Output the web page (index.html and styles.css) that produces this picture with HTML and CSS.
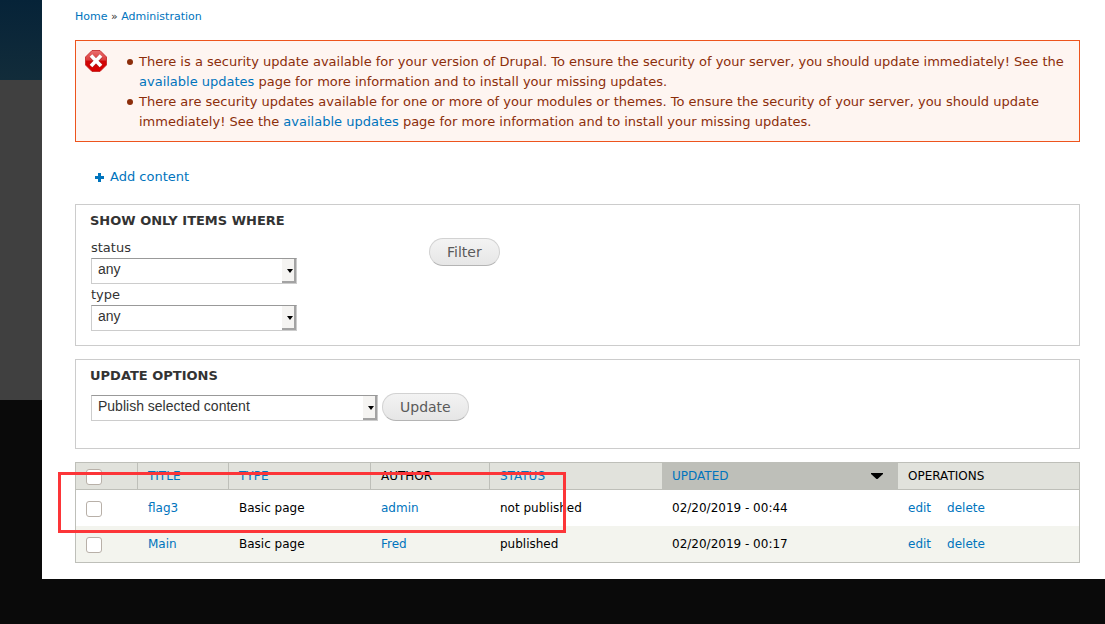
FILE: index.html
```html
<!DOCTYPE html>
<html lang="en">
<head>
<meta charset="utf-8">
<title>Content</title>
<link rel="stylesheet" href="styles.css">
</head>
<body>
<div class="shell">
  <div class="edge"><div class="edge-top"></div><div class="edge-mid"></div></div>
  <main class="page">
    <nav class="breadcrumb"><a href="#">Home</a> » <a href="#">Administration</a></nav>
    <div class="messages">
      <svg class="error-icon" viewBox="0 0 22 22" aria-hidden="true">
        <defs><linearGradient id="red" x1="0" y1="0" x2="0" y2="1">
          <stop offset="0" stop-color="#e87070"/><stop offset=".46" stop-color="#dc3b3b"/><stop offset=".5" stop-color="#d00606"/><stop offset="1" stop-color="#d80000"/>
        </linearGradient></defs>
        <path d="M7 .5h8L21.500 7v8L15 21.500H7L.5 15V7z" fill="url(#red)" stroke="#c22020" stroke-width=".8"/>
        <path d="M6 6l10 10M16 6L6 16" stroke="#8e3030" stroke-width="4.600" opacity=".5"/>
        <path d="M6 5.500l10 10.500M16 5.500L6 16" stroke="#fff" stroke-width="3.600"/>
      </svg>
      <ul>
        <li>There is a security update available for your version of Drupal. To ensure the security of your server, you should update immediately! See the <a href="#">available updates</a> page for more information and to install your missing updates.</li>
        <li>There are security updates available for one or more of your modules or themes. To ensure the security of your server, you should update immediately! See the <a href="#">available updates</a> page for more information and to install your missing updates.</li>
      </ul>
    </div>
    <a class="add" href="#"><svg viewBox="0 0 9 9" aria-hidden="true"><path d="M3 0h3v3h3v3H6v3H3V6H0V3h3z" fill="#0074bd"/></svg>Add content</a>

    <form>
      <section class="panel filter">
        <h2>Show only items where</h2>
        <div class="filter-body">
          <div class="fields">
            <label for="status">status</label>
            <span class="select"><select id="status"><option>any</option></select></span>
            <label for="type">type</label>
            <span class="select"><select id="type"><option>any</option></select></span>
          </div>
          <button type="button">Filter</button>
        </div>
      </section>

      <section class="panel update">
        <h2>Update options</h2>
        <div class="update-body">
          <span class="select wide"><select aria-label="Operation"><option>Publish selected content</option></select></span>
          <button type="button">Update</button>
        </div>
      </section>

      <div class="listing">
        <table>
          <colgroup><col class="c-check"><col class="c-title"><col class="c-type"><col class="c-author"><col class="c-status"><col class="c-updated"><col></colgroup>
          <thead>
            <tr>
              <th><input type="checkbox" aria-label="Select all rows"></th>
              <th><a href="#">TITLE</a></th>
              <th><a href="#">TYPE</a></th>
              <th>AUTHOR</th>
              <th><a href="#">STATUS</a></th>
              <th class="active"><a class="sort" href="#">UPDATED<svg viewBox="0 0 12 6" aria-hidden="true"><path d="M0 0h12v1L6.500 6h-1L0 1z"/></svg></a></th>
              <th>OPERATIONS</th>
            </tr>
          </thead>
          <tbody>
            <tr>
              <td><input type="checkbox" aria-label="Select flag3"></td>
              <td><a href="#">flag3</a></td><td>Basic page</td><td><a href="#">admin</a></td>
              <td>not published</td><td>02/20/2019 - 00:44</td>
              <td><span class="ops"><a href="#">edit</a><a href="#">delete</a></span></td>
            </tr>
            <tr>
              <td><input type="checkbox" aria-label="Select Main"></td>
              <td><a href="#">Main</a></td><td>Basic page</td><td><a href="#">Fred</a></td>
              <td>published</td><td>02/20/2019 - 00:17</td>
              <td><span class="ops"><a href="#">edit</a><a href="#">delete</a></span></td>
            </tr>
          </tbody>
        </table>
        <div class="highlight"></div>
      </div>
    </form>
  </main>
</div>
</body>
</html>
```
FILE: styles.css
```css
* { box-sizing: border-box; }
body {
  margin: 0;
  background: #0a0a0a;
  color: #333;
  font: 13px/20px "DejaVu Sans", sans-serif;
}
a { color: #0074bd; text-decoration: none; }
.shell { display: flex; align-items: flex-start; }
.edge { flex: 0 0 42px; }
.edge-top { height: 80px; background: linear-gradient(#062338, #122c3a); }
.edge-mid { height: 320px; background: #404040; }
.page { flex: 1; min-width: 0; background: #fff; padding: 7px 25px 16px 33px; }
.breadcrumb { font-size: 11px; }

.messages {
  display: flex;
  margin-top: 13px;
  padding: 11px 9px 9px;
  border: 1px solid #ed541d;
  background: #fef5f1;
  color: #8c2e0b;
}
.error-icon { flex: 0 0 22px; height: 22px; margin-top: -2px; }
.messages ul { margin: 0; padding: 0 0 0 20px; list-style: none; }
.messages li { display: flow-root; position: relative; padding-left: 12px; }
.messages li::before {
  content: "";
  position: absolute;
  top: 7px;
  left: 0;
  width: 6px;
  height: 6px;
  border-radius: 50%;
  background: #8c2e0b;
}
.add {
  display: flex;
  align-items: center;
  gap: 6px;
  width: max-content;
  margin: 25px 0 17px 20px;
}
.add svg { width: 9px; height: 9px; }

.panel { border: 1px solid #ccc; padding: 6px 15px 14px 14px; margin-bottom: 13px; }
h2 { margin: 0; font-size: 13px; line-height: 20px; text-transform: uppercase; }
.filter-body { display: flex; align-items: flex-start; margin: 7px 0 0 1px; }
.fields { display: flex; flex-direction: column; width: 338px; }
.fields label { line-height: 20px; }
.select { position: relative; display: block; width: 206px; height: 26px; }
.fields .select + label { margin-top: 1px; }
.select.wide { width: 287px; }
.select select {
  appearance: none;
  display: block;
  width: 100%;
  height: 26px;
  margin: 0;
  padding: 0 20px 4px 6px;
  border: 1px solid #ccc;
  border-top-color: #999;
  border-radius: 0;
  background: #fff;
  color: #333;
  font: 14px "Liberation Sans", Arial, sans-serif;
}
.select::before {
  content: "";
  position: absolute;
  top: 1px;
  right: 1px;
  bottom: 1px;
  width: 12px;
  background: #f5f4f2;
  border: solid #a3a3a3;
  border-width: 0 2px 2px 0;
  pointer-events: none;
}
.select::after {
  content: "";
  position: absolute;
  top: 11px;
  right: 4px;
  border: solid transparent;
  border-width: 4px 3px 0;
  border-top-color: #000;
  pointer-events: none;
}
button {
  height: 28px;
  margin: 0;
  padding: 0 17px;
  border: 1px solid #d2d2d2;
  border-bottom-color: #b4b4b4;
  border-radius: 14px;
  background: linear-gradient(#f3f3f3, #e6e6e6);
  color: #5a5a5a;
  font: 14px "DejaVu Sans", sans-serif;
}
.update { padding-bottom: 27px; }
.update-body { display: flex; align-items: flex-end; gap: 4px; margin: 7px 0 0 1px; }

.listing { position: relative; }
table {
  width: 100%;
  table-layout: fixed;
  border-collapse: separate;
  border-spacing: 0;
  border: 1px solid #bebfb9;
  color: #000;
  font-size: 12px;
  line-height: 16px;
}
.c-check { width: 62px; }
.c-title { width: 91px; }
.c-type { width: 142px; }
.c-author { width: 119px; }
.c-status { width: 172px; }
.c-updated { width: 236px; }
th, td { text-align: left; font-weight: normal; padding: 0 10px; }
th { height: 27px; background: #e1e2dc; border-right: 1px solid #bebfb9; border-bottom: 1px solid #bebfb9; }
th:nth-child(n+5) { border-right: 0; }
th.active { background: #bebfb9; }
td { height: 36px; }
tbody tr:nth-child(even) { background: #f3f4ee; }
.sort { display: flex; justify-content: space-between; align-items: center; padding-right: 5px; }
.sort svg { width: 12px; height: 6px; fill: #000; }
.ops { display: flex; gap: 16px; }
input[type="checkbox"] {
  appearance: none;
  display: block;
  width: 16px;
  height: 16px;
  margin: 2px 0 0;
  border: 1px solid #b8b0a8;
  border-radius: 3px;
  background: #fff;
}
.highlight {
  position: absolute;
  top: 10px;
  left: -17px;
  width: 508px;
  height: 61px;
  border: 3px solid #fc3538;
  pointer-events: none;
}
```
